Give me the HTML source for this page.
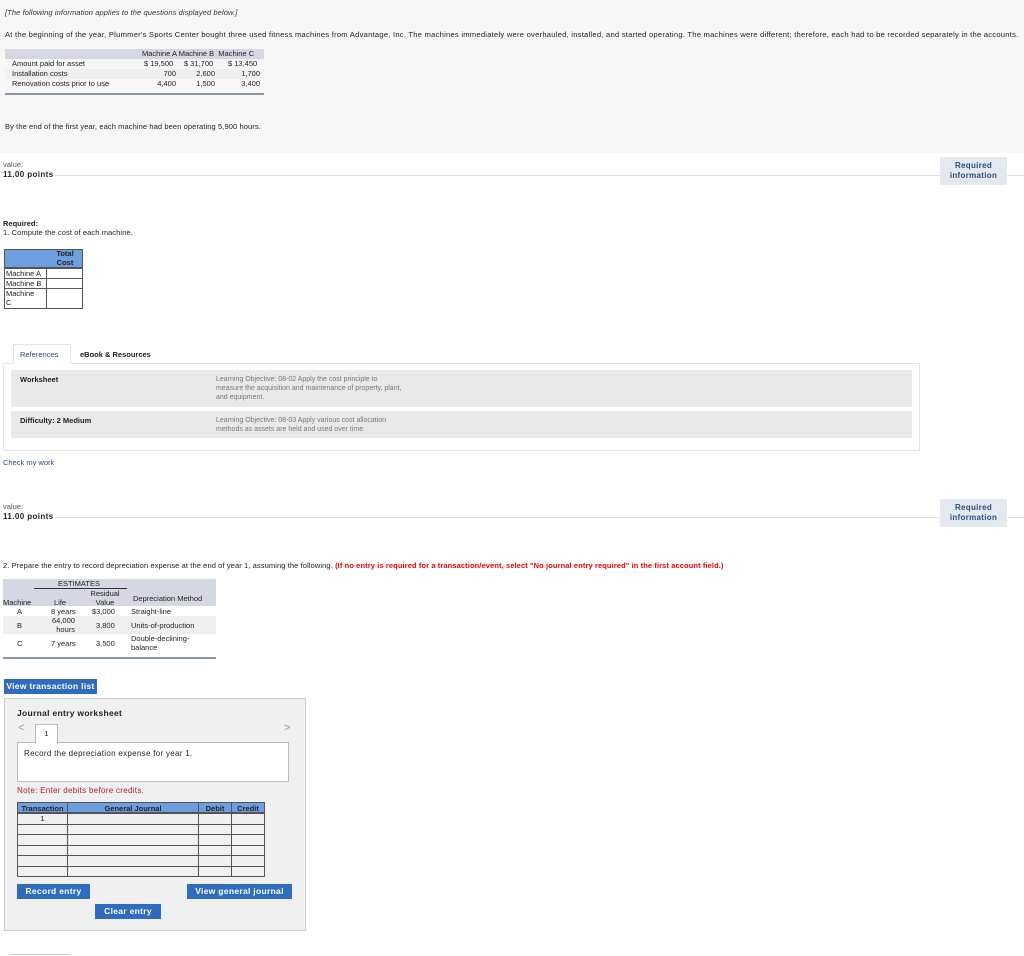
<!DOCTYPE html>
<html><head><meta charset="utf-8"><style>
*{margin:0;padding:0;box-sizing:border-box}
body{width:1024px;height:956px;background:#fff;font-family:"Liberation Sans",Arial,sans-serif;color:#222;position:relative;overflow:hidden;font-size:7.5px}
.a{position:absolute;white-space:nowrap}
.req{position:absolute;left:940px;width:67px;height:28px;background:#e4e9f0;border-radius:2px;color:#2c4c7c;font-weight:bold;font-size:8px;text-align:center;line-height:10px;padding-top:4px;letter-spacing:.3px}
.hr{position:absolute;height:1px;background:#e3e3e3}
table{border-collapse:collapse}
.btn{position:absolute;background:#2f6bbf;color:#fff;font-weight:bold;font-size:8.5px;text-align:center;line-height:15px;height:15px;letter-spacing:.3px}
.cell{position:absolute;border:1px solid #555}
</style></head><body>
<div class="a" style="left:0;top:0;width:1024px;height:153px;background:#f7f7f7"></div>
<div class="a" style="left:5px;top:8px;font-style:italic;color:#333;letter-spacing:.1px">[The following information applies to the questions displayed below.]</div>
<div class="a" style="left:5px;top:30px;font-size:7.6px;letter-spacing:.24px">At the beginning of the year, Plummer's Sports Center bought three used fitness machines from Advantage, Inc. The machines immediately were overhauled, installed, and started operating. The machines were different; therefore, each had to be recorded separately in the accounts.</div>
<div class="a" style="left:5px;top:49px;width:259px;height:10px;background:#d3d8e2"></div>
<div class="a" style="left:5px;top:69px;width:259px;height:10px;background:#efefef"></div>
<div class="a" style="left:142px;top:49px">Machine A Machine B &nbsp;Machine C</div>
<div class="a" style="left:12px;top:59px">Amount paid for asset</div>
<div class="a" style="left:12px;top:69px">Installation costs</div>
<div class="a" style="left:12px;top:79px">Renovation costs prior to use</div>
<div class="a" style="left:144px;top:59px">$ 19,500</div>
<div class="a" style="left:184px;top:59px">$ 31,700</div>
<div class="a" style="left:228px;top:59px">$ 13,450</div>
<div class="a" style="left:151px;top:69px;width:25px;text-align:right">700</div>
<div class="a" style="left:190px;top:69px;width:25px;text-align:right">2,600</div>
<div class="a" style="left:235px;top:69px;width:25px;text-align:right">1,700</div>
<div class="a" style="left:151px;top:79px;width:25px;text-align:right">4,400</div>
<div class="a" style="left:190px;top:79px;width:25px;text-align:right">1,500</div>
<div class="a" style="left:235px;top:79px;width:25px;text-align:right">3,400</div>
<div class="a" style="left:5px;top:93px;width:259px;height:2px;background:#8a96a8"></div>
<div class="a" style="left:5px;top:122px;letter-spacing:.1px">By the end of the first year, each machine had been operating 5,900 hours.</div>

<div class="a" style="left:3px;top:160px;color:#555">value:</div>
<div class="a" style="left:3px;top:170px;font-weight:bold;font-size:8px;letter-spacing:.4px">11.00 points</div>
<div class="hr" style="left:55px;top:175px;width:969px"></div>
<div class="req" style="top:157px">Required<br>information</div>

<div class="a" style="left:3px;top:219px;font-weight:bold">Required:</div>
<div class="a" style="left:3px;top:228px;letter-spacing:.1px">1. Compute the cost of each machine.</div>
<div class="a" style="left:4px;top:249px;width:79px;height:19px;background:#6b9fe0;border:1px solid #555"></div>
<div class="a" style="left:47px;top:249px;width:36px;text-align:center;font-weight:bold;line-height:9px">Total<br>Cost</div>
<div class="cell" style="left:4px;top:268px;width:43px;height:11px;padding-left:1px">Machine A</div>
<div class="cell" style="left:46px;top:268px;width:37px;height:11px"></div>
<div class="cell" style="left:4px;top:278px;width:43px;height:11px;padding-left:1px">Machine B</div>
<div class="cell" style="left:46px;top:278px;width:37px;height:11px"></div>
<div class="cell" style="left:4px;top:288px;width:43px;height:21px;padding-left:1px;line-height:9px">Machine<br>C</div>
<div class="cell" style="left:46px;top:288px;width:37px;height:21px"></div>

<div class="a" style="left:3px;top:363px;width:917px;height:88px;border:1px solid #e5e5e5"></div>
<div class="a" style="left:13px;top:344px;width:58px;height:20px;border:1px solid #e5e5e5;border-bottom:none;background:#fff"></div>
<div class="a" style="left:20px;top:350px;color:#2c4c7c">References</div>
<div class="a" style="left:80px;top:350px;font-weight:bold;color:#222">eBook &amp; Resources</div>
<div class="a" style="left:11px;top:370px;width:901px;height:37px;background:#e9e9e9"></div>
<div class="a" style="left:11px;top:411px;width:901px;height:27px;background:#e9e9e9"></div>
<div class="a" style="left:20px;top:375px;font-weight:bold">Worksheet</div>
<div class="a" style="left:20px;top:416px;font-weight:bold">Difficulty: 2 Medium</div>
<div class="a" style="left:216px;top:375px;color:#777;line-height:9px;font-size:7px">Learning Objective: 08-02 Apply the cost principle to<br>measure the acquisition and maintenance of property, plant,<br>and equipment.</div>
<div class="a" style="left:216px;top:416px;color:#777;line-height:9px;font-size:7px">Learning Objective: 08-03 Apply various cost allocation<br>methods as assets are held and used over time.</div>
<div class="a" style="left:3px;top:458px;color:#2c4c7c">Check my work</div>

<div class="a" style="left:3px;top:502px;color:#555">value:</div>
<div class="a" style="left:3px;top:512px;font-weight:bold;font-size:8px;letter-spacing:.4px">11.00 points</div>
<div class="hr" style="left:55px;top:517px;width:969px"></div>
<div class="req" style="top:499px">Required<br>information</div>

<div class="a" style="left:3px;top:561px;letter-spacing:.1px">2. Prepare the entry to record depreciation expense at the end of year 1, assuming the following. <b style="color:#e00">(If no entry is required for a transaction/event, select "No journal entry required" in the first account field.)</b></div>
<div class="a" style="left:3px;top:579px;width:213px;height:27px;background:#d3d8e2"></div>
<div class="a" style="left:3px;top:616px;width:213px;height:18px;background:#efefef"></div>
<div class="a" style="left:58px;top:579px">ESTIMATES</div>
<div class="a" style="left:34px;top:588px;width:93px;height:1px;background:#333"></div>
<div class="a" style="left:87px;top:589px;width:36px;text-align:center;line-height:9px">Residual<br>Value</div>
<div class="a" style="left:133px;top:594px">Depreciation Method</div>
<div class="a" style="left:3px;top:598px">Machine</div>
<div class="a" style="left:54px;top:598px">Life</div>
<div class="a" style="left:17px;top:607px">A</div><div class="a" style="left:51px;top:607px">8 years</div><div class="a" style="left:92px;top:607px">$3,000</div><div class="a" style="left:131px;top:607px">Straight-line</div>
<div class="a" style="left:17px;top:621px">B</div><div class="a" style="left:52px;top:616px;line-height:9px;text-align:right">64,000<br>hours</div><div class="a" style="left:96px;top:621px">3,800</div><div class="a" style="left:131px;top:621px">Units-of-production</div>
<div class="a" style="left:17px;top:639px">C</div><div class="a" style="left:51px;top:639px">7 years</div><div class="a" style="left:96px;top:639px">3,500</div><div class="a" style="left:131px;top:634px;line-height:9px">Double-declining-<br>balance</div>
<div class="a" style="left:3px;top:657px;width:213px;height:2px;background:#8a96a8"></div>

<div class="btn" style="left:4px;top:679px;width:93px">View transaction list</div>
<div class="a" style="left:4px;top:698px;width:302px;height:233px;background:#f0f0f0;border:1px solid #ccc"></div>
<div class="a" style="left:17px;top:708px;font-weight:bold;font-size:8.5px;letter-spacing:.3px">Journal entry worksheet</div>
<div class="a" style="left:18px;top:722px;color:#999;font-size:11px">&lt;</div>
<div class="a" style="left:284px;top:722px;color:#999;font-size:11px">&gt;</div>
<div class="a" style="left:17px;top:742px;width:272px;height:40px;background:#fff;border:1px solid #bbb"></div>
<div class="a" style="left:35px;top:724px;width:23px;height:20px;background:#fff;border:1px solid #bbb;border-bottom:none;text-align:center;line-height:18px">1</div>
<div class="a" style="left:24px;top:749px;font-size:8px;letter-spacing:.3px">Record the depreciation expense for year 1.</div>
<div class="a" style="left:17px;top:786px;color:#b02020;font-size:8px;letter-spacing:.3px">Note: Enter debits before credits.</div>
<div class="a" style="left:17px;top:802px;width:248px;height:11px;background:#6b9fe0;border:1px solid #555"></div>
<table class="a" style="left:17px;top:802px;width:248px;font-size:7.5px">
<tr style="height:11px;font-weight:bold;text-align:center"><td style="border:1px solid #555;width:50px">Transaction</td><td style="border:1px solid #555;width:131px">General Journal</td><td style="border:1px solid #555;width:33px">Debit</td><td style="border:1px solid #555">Credit</td></tr>
<tr style="height:10.5px"><td style="border:1px solid #555;text-align:center">1</td><td style="border:1px solid #555"></td><td style="border:1px solid #555"></td><td style="border:1px solid #555"></td></tr>
<tr style="height:10.5px"><td style="border:1px solid #555"></td><td style="border:1px solid #555"></td><td style="border:1px solid #555"></td><td style="border:1px solid #555"></td></tr>
<tr style="height:10.5px"><td style="border:1px solid #555"></td><td style="border:1px solid #555"></td><td style="border:1px solid #555"></td><td style="border:1px solid #555"></td></tr>
<tr style="height:10.5px"><td style="border:1px solid #555"></td><td style="border:1px solid #555"></td><td style="border:1px solid #555"></td><td style="border:1px solid #555"></td></tr>
<tr style="height:10.5px"><td style="border:1px solid #555"></td><td style="border:1px solid #555"></td><td style="border:1px solid #555"></td><td style="border:1px solid #555"></td></tr>
<tr style="height:10.5px"><td style="border:1px solid #555"></td><td style="border:1px solid #555"></td><td style="border:1px solid #555"></td><td style="border:1px solid #555"></td></tr>
</table>
<div class="btn" style="left:17px;top:884px;width:73px">Record entry</div>
<div class="btn" style="left:187px;top:884px;width:105px">View general journal</div>
<div class="btn" style="left:95px;top:904px;width:66px">Clear entry</div>
<div class="a" style="left:10px;top:954px;width:60px;height:1px;background:#ccc"></div>
</body></html>
